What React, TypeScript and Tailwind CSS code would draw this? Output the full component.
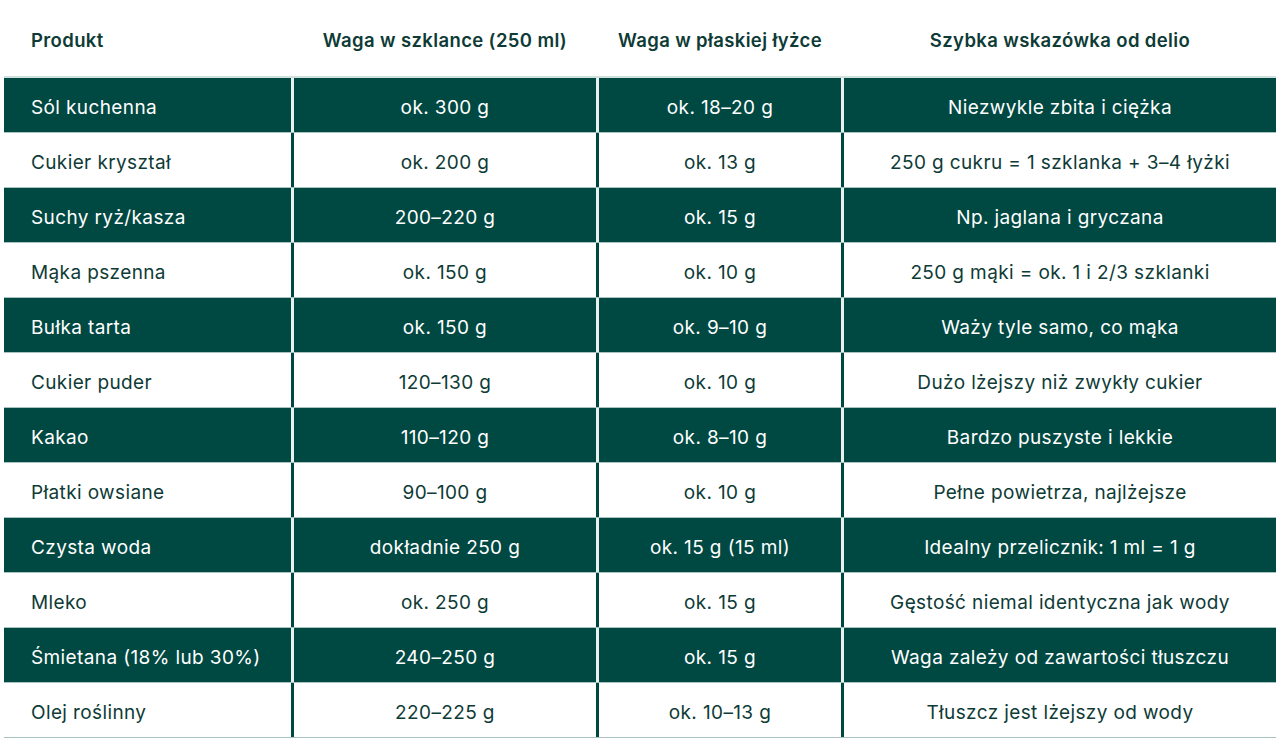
const rows: [string, string, string, string][] = [
	["Sól kuchenna", "ok. 300 g", "ok. 18–20 g", "Niezwykle zbita i ciężka"],
	["Cukier kryształ", "ok. 200 g", "ok. 13 g", "250 g cukru = 1 szklanka + 3–4 łyżki"],
	["Suchy ryż/kasza", "200–220 g", "ok. 15 g", "Np. jaglana i gryczana"],
	["Mąka pszenna", "ok. 150 g", "ok. 10 g", "250 g mąki = ok. 1 i 2/3 szklanki"],
	["Bułka tarta", "ok. 150 g", "ok. 9–10 g", "Waży tyle samo, co mąka"],
	["Cukier puder", "120–130 g", "ok. 10 g", "Dużo lżejszy niż zwykły cukier"],
	["Kakao", "110–120 g", "ok. 8–10 g", "Bardzo puszyste i lekkie"],
	["Płatki owsiane", "90–100 g", "ok. 10 g", "Pełne powietrza, najlżejsze"],
	["Czysta woda", "dokładnie 250 g", "ok. 15 g (15 ml)", "Idealny przelicznik: 1 ml = 1 g"],
	["Mleko", "ok. 250 g", "ok. 15 g", "Gęstość niemal identyczna jak wody"],
	["Śmietana (18% lub 30%)", "240–250 g", "ok. 15 g", "Waga zależy od zawartości tłuszczu"],
	["Olej roślinny", "220–225 g", "ok. 10–13 g", "Tłuszcz jest lżejszy od wody"],
];

const cols = "grid grid-cols-[287px_305px_245px_1fr]";

export default function App() {
	return (
		<div className="bg-white w-[1280px] px-[4px] font-['Inter','Liberation_Sans',sans-serif] text-[#0e3b36]">
			<div className={`${cols} h-[78px] pt-[6px] items-center text-[18.5px] tracking-[0.02em] font-semibold border-b-2 border-[#cfe0dd]`}>
				<div className="pl-[27px]">Produkt</div>
				<div className="text-center pl-[3px]">Waga w szklance (250 ml)</div>
				<div className="text-center pl-[3px]">Waga w płaskiej łyżce</div>
				<div className="text-center pl-[3px]">Szybka wskazówka od delio</div>
			</div>
			{rows.map((r, i) => {
				const dark = i % 2 === 0;
				const cell = dark
					? "bg-[#004842] text-white border-[#e9f1f0]"
					: "bg-white text-[#0e3b36] border-[#004842]";
				return (
					<div
						key={r[0]}
						className={`${cols} h-[55px] text-[19px] tracking-[0.02em] border-b border-[#a9c4c0]`}
					>
						<div className={`${cell} flex items-center pl-[27px] pt-[6px]`}>{r[0]}</div>
						<div className={`${cell} flex items-center justify-center border-l-[3px] pt-[6px]`}>{r[1]}</div>
						<div className={`${cell} flex items-center justify-center border-l-[3px] pt-[6px]`}>{r[2]}</div>
						<div className={`${cell} flex items-center justify-center border-l-[3px] pt-[6px]`}>{r[3]}</div>
					</div>
				);
			})}
		</div>
	);
}
